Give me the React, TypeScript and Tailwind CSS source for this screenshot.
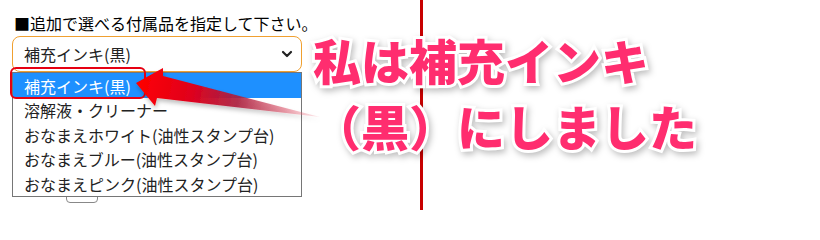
import React from 'react';

const options = [
  '補充インキ(黒)',
  '溶解液・クリーナー',
  'おなまえホワイト(油性スタンプ台)',
  'おなまえブルー(油性スタンプ台)',
  'おなまえピンク(油性スタンプ台)',
];

function Arrow() {
  return (
    <svg
      className="absolute left-0 top-0 z-20 pointer-events-none"
      width="820"
      height="210"
      viewBox="0 0 820 210"
    >
      <defs>
        <linearGradient id="arrowFill" gradientUnits="userSpaceOnUse" x1="136" y1="83" x2="320" y2="118">
          <stop offset="0" stopColor="#ff0000" />
          <stop offset="0.3" stopColor="#e0001c" />
          <stop offset="0.55" stopColor="#ac1f3e" stopOpacity="0.9" />
          <stop offset="0.8" stopColor="#d84860" stopOpacity="0.55" />
          <stop offset="1" stopColor="#f07080" stopOpacity="0.15" />
        </linearGradient>
        <filter id="arrowShadow" x="-10%" y="-30%" width="130%" height="170%">
          <feDropShadow dx="1" dy="3" stdDeviation="2" floodColor="#000" floodOpacity="0.25" />
        </filter>
      </defs>
      <polygon
        points="136,83 163,68 163,76 320,117 157,98 155,106"
        fill="url(#arrowFill)"
        filter="url(#arrowShadow)"
      />
    </svg>
  );
}

export default function App() {
  return (
    <div className="relative flex h-[210px] w-[820px] bg-white overflow-hidden font-['Noto_Sans_CJK_JP','Noto_Sans',sans-serif]">
      {/* left column: form */}
      <div className="relative w-[420px] shrink-0 pl-3 pt-[12px]">
        <p className="pl-[2px] text-[16px] leading-[22px] text-black">■追加で選べる付属品を指定して下さい。</p>

        <div className="mt-[2px] flex h-9 w-[290px] items-center justify-between rounded-lg border border-[#f0a030] bg-white pl-[11px] pr-[8px] text-[16px] text-[#222]">
          <span>補充インキ(黒)</span>
          <svg width="12" height="8" viewBox="0 0 12 8" className="text-[#222]">
            <path d="M2 2 L6 6 L10 2" fill="none" stroke="currentColor" strokeWidth="2.2" strokeLinecap="round" strokeLinejoin="round" />
          </svg>
        </div>

        {/* control hidden below the open list */}
        <div className="ml-[54px] mt-[118px] h-[13px] w-[32px] rounded-sm border border-[#888]" />

        {/* open dropdown list */}
        <ul className="absolute left-3 top-[72px] z-10 w-[290px] border border-[#767676] bg-white text-[16px] text-[#222]">
          {options.map((o, i) => (
            <li
              key={o}
              className={
                i === 0
                  ? 'flex h-[25px] items-center bg-[#1e90ff] pl-[11px] text-white'
                  : 'flex h-[24.6px] items-center pl-[11px]'
              }
            >
              {o}
            </li>
          ))}
        </ul>

        {/* red marker around the chosen option */}
        <div className="absolute left-[10px] top-[67px] z-20 h-[32px] w-[136px] rounded-md border-2 border-[#e60012]" />
      </div>

      {/* divider */}
      <div className="w-[3px] shrink-0 bg-[#c80000]" />

      <Arrow />

      {/* caption */}
      <div className="absolute left-[313px] top-[26px] z-30 font-black text-[48px] leading-[66px] text-[#ff2d6f] [-webkit-text-stroke:6px_white] [paint-order:stroke_fill] drop-shadow-[2px_3px_3px_rgba(0,0,0,0.25)] font-['Noto_Sans_CJK_JP',sans-serif]">
        <div>私は補充インキ</div>
        <div>（黒）にしました</div>
      </div>
    </div>
  );
}
